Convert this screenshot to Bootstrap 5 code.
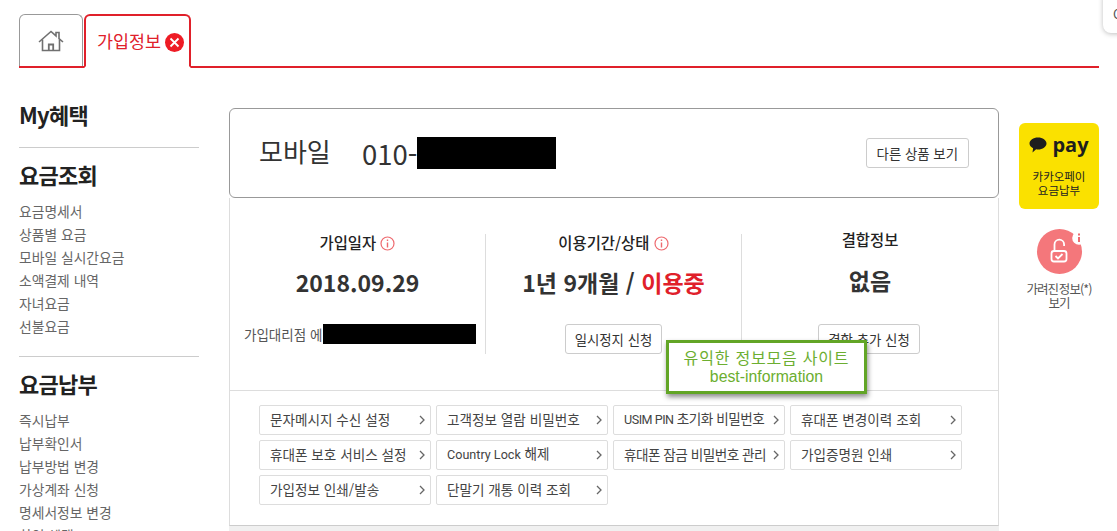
<!DOCTYPE html>
<html lang="ko">
<head>
  <meta charset="UTF-8">
  <meta name="viewport" content="width=device-width, initial-scale=1.0">
  <title>가입정보</title>
  <link href="https://cdn.jsdelivr.net/npm/bootstrap@5.3.2/dist/css/bootstrap.min.css" rel="stylesheet">
  <style>
    html, body { height: 531px; overflow: hidden; }
    body { font-family: "Noto Sans CJK KR", "Noto Sans", sans-serif; color: #333; background: #fff; position: relative; }
    .page-wrap { width: 1080px; margin-left: 19px; padding-top: 14px; }
    .tab-bar { height: 54px; border-bottom: 2px solid #e0202a; }
    .tab-home { width: 64px; height: 52px; border: 1px solid #999; border-bottom: 0; border-radius: 6px 6px 0 0; }
    .tab-on { width: 107px; height: 54px; margin-left: 1px; margin-bottom: -2px; border: 2px solid #e0202a; border-bottom: 2px solid #fff; border-radius: 6px 6px 0 0; color: #e0202a; font-size: 17.4px; padding-left: 11px; gap: 4px; white-space: nowrap; }
    .tab-x { width: 19px; height: 19px; margin-top: 2px; flex-shrink: 0; }
    .side-col { width: 180px; }
    .main-col { width: 770px; margin-left: 30px; padding-top: 40px; }
    .right-col { width: 80px; margin-left: 20px; padding-top: 55px; }
    .side-title { font-size: 22px; font-weight: 700; color: #222; line-height: 30px; letter-spacing: -.7px; margin: 0; }
    .side-title.first-title { margin-top: 31px; }
    .side-rule { border-top: 1px solid #ccc; margin: 18px 0 11px; }
    .side-list { list-style: none; margin: 11px 0 0; padding: 0; }
    .side-list li { font-size: 13.8px; line-height: 23px; color: #666; white-space: nowrap; }
    .phone-box { height: 90px; border: 1px solid #999; border-radius: 6px; padding: 0 29px; }
    .phone-kind { font-size: 26px; color: #333; width: 103px; line-height: 30px; margin-top: -4px; }
    .phone-num { font-size: 27.5px; color: #333; line-height: 30px; }
    .mask { background: #000; display: block; }
    .mask-phone { width: 139px; height: 32px; }
    .mask-agent { width: 153px; height: 20px; }
    .btn-plain { font-size: 13.4px; line-height: 28px; height: 30px; padding: 0 9px; border: 1px solid #ccc; border-radius: 3px; color: #333; background: #fff; white-space: nowrap; }
    .btn-plain.top-btn { padding: 0 10px; }
    .info-box { height: 193px; padding: 36px 0; border-left: 1px solid #ddd; border-right: 1px solid #ddd; border-bottom: 1px solid #ddd; }
    .info-cell { width: 256px; height: 120px; text-align: center; border-right: 1px solid #ddd; position: relative; }
    .info-cell:last-child { border-right: 0; }
    .info-head { font-size: 15.4px; font-weight: 500; color: #222; line-height: 18px; margin-top: -1px; }
    .info-cell:last-child .info-head { margin-top: -4px; }
    .info-val { font-size: 23px; font-weight: 700; color: #333; line-height: 32px; margin-top: 15px; }
    .info-val em { font-style: normal; color: #e0202a; }
    .info-cell:last-child .info-val { margin-top: 16px; }
    .info-foot { position: absolute; left: 0; right: 0; top: 90px; }
    .info-cell:last-child .info-foot { right: 2px; }
    .agent-line { font-size: 13.5px; color: #555; padding-left: 14px; gap: 1px; white-space: nowrap; }
    .i-mark { width: 15px; height: 15px; vertical-align: -2px; }
    .link-grid { display: grid; grid-template-columns: repeat(4, 172px); gap: 5px; padding: 14px 0 20px 29px; border-left: 1px solid #ddd; border-right: 1px solid #ddd; border-bottom: 1px solid #ccc; }
    .link-item { height: 30px; border: 1px solid #ddd; border-radius: 2px; font-size: 13.6px; color: #444; padding: 0 5px 2px 10px; white-space: nowrap; }
    .link-item svg { width: 6px; height: 10px; flex-shrink: 0; margin-top: 2px; }
    .latin-part { font-family: Roboto, sans-serif; font-size: 12.6px; }
    .fit-tight { letter-spacing: -.5px; }
    .bottom-strip { height: 20px; background: #f0f0f0; }
    .kakao-box { height: 86px; background: #fae100; border-radius: 6px; color: #222; text-align: center; font-size: 11.5px; line-height: 14px; padding-top: 10px; }
    .kakao-logo { font-family: "Open Sans", sans-serif; font-size: 20px; font-weight: 700; line-height: 24px; gap: 5px; color: #1e1e1e; margin-bottom: 12px; }
    .lock-box { text-align: center; font-size: 12.5px; line-height: 14px; letter-spacing: -.9px; word-spacing: -2px; color: #555; margin-top: 20px; white-space: nowrap; }
    .lock-icon { display: block; margin-bottom: 7px; }
    .tip-box { position: absolute; left: 666px; top: 340px; width: 201px; height: 54px; background: #fff; border: 3px solid #62a526; box-shadow: 1px 3px 5px rgba(0,0,0,.45); color: #6cae30; text-align: center; font-size: 16px; line-height: 20px; padding-top: 4px; letter-spacing: .8px; white-space: nowrap; }
    .tip-box span { display: block; font-family: "Liberation Sans", sans-serif; font-size: 15.8px; letter-spacing: 0; }
    .corner-chip { position: absolute; left: 1103px; top: -10px; width: 40px; height: 43px; background: #fff; border-radius: 8px; box-shadow: 0 1px 5px rgba(0,0,0,.25); font-size: 13px; color: #555; padding: 16px 0 0 10px; line-height: 16px; }
  </style>
</head>
<body>
  <div class="page-wrap">
    <div class="tab-bar d-flex align-items-start">
      <div class="tab-home d-flex align-items-center justify-content-center">
        <svg width="26" height="22" viewBox="0 0 26 22" fill="none" stroke="#707070" stroke-width="1.6"><path d="M1 12 13 1.500l5 4.400V2.500h3v6.100l4 3.400"/><path d="M4.500 9.500V20.500h17V9.500"/><path d="M10.800 20.500v-6h4.400v6" stroke-width="1.800"/></svg>
      </div>
      <div class="tab-on d-flex align-items-center">
        <span>가입정보</span>
        <svg class="tab-x" viewBox="0 0 19 19"><circle cx="9.500" cy="9.500" r="9.500" fill="#ee1c25"/><path d="M5.500 5.500l8 8M13.500 5.500l-8 8" stroke="#fff" stroke-width="1.800"/></svg>
      </div>
    </div>

    <div class="d-flex">
      <aside class="side-col">
        <h2 class="side-title first-title">My혜택</h2>
        <div class="side-rule"></div>
        <h2 class="side-title">요금조회</h2>
        <ul class="side-list">
          <li>요금명세서</li><li>상품별 요금</li><li>모바일 실시간요금</li><li>소액결제 내역</li><li>자녀요금</li><li>선불요금</li>
        </ul>
        <div class="side-rule"></div>
        <h2 class="side-title">요금납부</h2>
        <ul class="side-list">
          <li>즉시납부</li><li>납부확인서</li><li>납부방법 변경</li><li>가상계좌 신청</li><li>명세서정보 변경</li><li>할인 혜택</li>
        </ul>
      </aside>

      <main class="main-col">
        <div class="phone-box d-flex align-items-center">
          <div class="phone-kind">모바일</div>
          <div class="phone-num d-flex align-items-center">010-<span class="mask mask-phone"></span></div>
          <button class="btn-plain top-btn ms-auto">다른 상품 보기</button>
        </div>
        <div class="info-box d-flex">
          <div class="info-cell">
            <div class="info-head">가입일자 <svg class="i-mark" viewBox="0 0 15 15" fill="none" stroke="#ee6a6f" stroke-width="1.200"><circle cx="7.500" cy="7.500" r="6.500"/><path d="M7.500 6.500v5M7.500 3.500v1.500" stroke-width="1.400"/></svg></div>
            <div class="info-val">2018.09.29</div>
            <div class="info-foot agent-line d-flex align-items-center"><span>가입대리점 에</span><span class="mask mask-agent"></span></div>
          </div>
          <div class="info-cell">
            <div class="info-head">이용기간/상태 <svg class="i-mark" viewBox="0 0 15 15" fill="none" stroke="#ee6a6f" stroke-width="1.200"><circle cx="7.500" cy="7.500" r="6.500"/><path d="M7.500 6.500v5M7.500 3.500v1.500" stroke-width="1.400"/></svg></div>
            <div class="info-val">1년 9개월 / <em>이용중</em></div>
            <div class="info-foot"><button class="btn-plain">일시정지 신청</button></div>
          </div>
          <div class="info-cell">
            <div class="info-head">결합정보</div>
            <div class="info-val">없음</div>
            <div class="info-foot"><button class="btn-plain">결합 추가 신청</button></div>
          </div>
        </div>
        <div class="link-grid">
          <div class="link-item d-flex align-items-center justify-content-between"><span>문자메시지 수신 설정</span><svg viewBox="0 0 6 10" fill="none" stroke="#666" stroke-width="1.300"><path d="M1 1l4 4-4 4"/></svg></div>
          <div class="link-item d-flex align-items-center justify-content-between"><span>고객정보 열람 비밀번호</span><svg viewBox="0 0 6 10" fill="none" stroke="#666" stroke-width="1.300"><path d="M1 1l4 4-4 4"/></svg></div>
          <div class="link-item d-flex align-items-center justify-content-between"><span class="fit-tight"><span class="latin-part">USIM PIN</span> 초기화 비밀번호</span><svg viewBox="0 0 6 10" fill="none" stroke="#666" stroke-width="1.300"><path d="M1 1l4 4-4 4"/></svg></div>
          <div class="link-item d-flex align-items-center justify-content-between"><span>휴대폰 변경이력 조회</span><svg viewBox="0 0 6 10" fill="none" stroke="#666" stroke-width="1.300"><path d="M1 1l4 4-4 4"/></svg></div>
          <div class="link-item d-flex align-items-center justify-content-between"><span>휴대폰 보호 서비스 설정</span><svg viewBox="0 0 6 10" fill="none" stroke="#666" stroke-width="1.300"><path d="M1 1l4 4-4 4"/></svg></div>
          <div class="link-item d-flex align-items-center justify-content-between"><span><span class="latin-part">Country Lock</span> 해제</span><svg viewBox="0 0 6 10" fill="none" stroke="#666" stroke-width="1.300"><path d="M1 1l4 4-4 4"/></svg></div>
          <div class="link-item d-flex align-items-center justify-content-between"><span class="fit-tight">휴대폰 잠금 비밀번호 관리</span><svg viewBox="0 0 6 10" fill="none" stroke="#666" stroke-width="1.300"><path d="M1 1l4 4-4 4"/></svg></div>
          <div class="link-item d-flex align-items-center justify-content-between"><span>가입증명원 인쇄</span><svg viewBox="0 0 6 10" fill="none" stroke="#666" stroke-width="1.300"><path d="M1 1l4 4-4 4"/></svg></div>
          <div class="link-item d-flex align-items-center justify-content-between"><span>가입정보 인쇄/발송</span><svg viewBox="0 0 6 10" fill="none" stroke="#666" stroke-width="1.300"><path d="M1 1l4 4-4 4"/></svg></div>
          <div class="link-item d-flex align-items-center justify-content-between"><span>단말기 개통 이력 조회</span><svg viewBox="0 0 6 10" fill="none" stroke="#666" stroke-width="1.300"><path d="M1 1l4 4-4 4"/></svg></div>
        </div>
        <div class="bottom-strip"></div>
      </main>

      <aside class="right-col">
        <div class="kakao-box">
          <div class="kakao-logo d-flex align-items-center justify-content-center">
            <svg width="18" height="16" viewBox="0 0 18 16"><path d="M9 .5c4.700 0 8.500 2.700 8.500 6S13.700 12.500 9 12.500c-.7 0-1.300-.1-1.900-.2L3.500 15.500l.6-4.200C2 10.200.5 8.500.5 6.500.5 3.200 4.300.5 9 .5z" fill="#1e1e1e"/></svg>
            <span>pay</span>
          </div>
          카카오페이<br>요금납부
        </div>
        <div class="lock-box">
          <svg class="lock-icon" width="80" height="46" viewBox="0 0 80 46">
            <circle cx="40.500" cy="22.500" r="22.500" fill="#f4777b"/>
            <path d="M35.500 22v-6.500a4.800 4.800 0 0 1 9.600 0v1.500" fill="none" stroke="#fff" stroke-width="1.800"/>
            <rect x="32.500" y="22" width="15" height="10.500" rx="2.500" fill="none" stroke="#fff" stroke-width="1.800"/>
            <path d="M36.500 27l2.500 2.500 4.500-4.500" fill="none" stroke="#fff" stroke-width="1.800"/>
            <circle cx="60" cy="9" r="6.800" fill="#fff"/>
            <path d="M60 8v5M60 4.500v2" stroke="#ee6a6f" stroke-width="2"/>
          </svg>
          가려진 정보(*)<br>보기
        </div>
      </aside>
    </div>
  </div>

  <div class="tip-box">유익한 정보모음 사이트<span>best-information</span></div>
  <div class="corner-chip">C</div>
  <script src="https://cdn.jsdelivr.net/npm/bootstrap@5.3.2/dist/js/bootstrap.bundle.min.js"></script>
</body>
</html>
